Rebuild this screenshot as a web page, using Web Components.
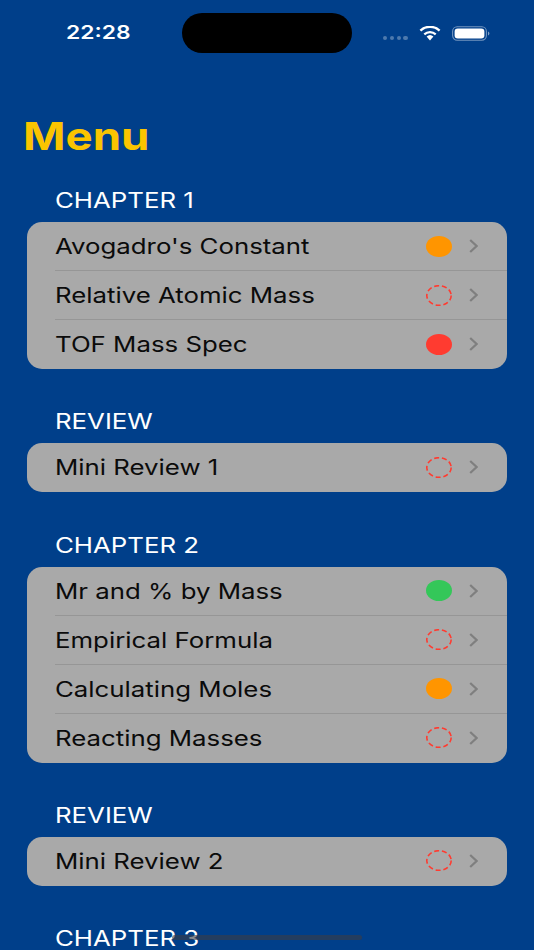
<!DOCTYPE html>
<html>
<head>
<meta charset="utf-8">
<style>
  html, body { margin: 0; height: 950px; overflow: hidden; background: #003f8a; }
  body { font-family: Inter, "Liberation Sans", sans-serif; }
</style>
</head>
<body>
<app-screen>
  <status-bar time="22:28"></status-bar>
  <menu-title>Menu</menu-title>
  <menu-section label="CHAPTER 1">
    <menu-row status="orange">Avogadro's Constant</menu-row>
    <menu-row status="none">Relative Atomic Mass</menu-row>
    <menu-row status="red">TOF Mass Spec</menu-row>
  </menu-section>
  <menu-section label="REVIEW">
    <menu-row status="none">Mini Review 1</menu-row>
  </menu-section>
  <menu-section label="CHAPTER 2">
    <menu-row status="green">Mr and % by Mass</menu-row>
    <menu-row status="none">Empirical Formula</menu-row>
    <menu-row status="orange">Calculating Moles</menu-row>
    <menu-row status="none">Reacting Masses</menu-row>
  </menu-section>
  <menu-section label="REVIEW">
    <menu-row status="none">Mini Review 2</menu-row>
  </menu-section>
  <menu-section label="CHAPTER 3"></menu-section>
</app-screen>
<script>
'use strict';
// the shot is squeezed from a phone screen, so all text is wider than tall
const STRETCH = 1.2;

class AppScreen extends HTMLElement {
  constructor() {
    super();
    this.root = this.attachShadow({mode: 'open'});
  }
  connectedCallback() {
    this.root.innerHTML = `
    <style>
      :host {
        display: block;
        position: relative;
        height: 950px;
        overflow: hidden;
        background: #003f8a;
      }
      .home {
        position: absolute;
        left: 172px;
        top: 935px;
        width: 190px;
        height: 5px;
        border-radius: 3px;
        background: rgba(60, 60, 67, .6);
      }
    </style>
    <slot></slot>
    <div class="home"></div>
    `;
  }
}
customElements.define('app-screen', AppScreen);

class StatusBar extends HTMLElement {
  constructor() {
    super();
    this.root = this.attachShadow({mode: 'open'});
  }
  connectedCallback() {
    this.root.innerHTML = `
    <style>
      :host {
        display: flex;
        align-items: center;
        height: 40px;
        padding-top: 13px;
        color: #fff;
      }
      .time {
        width: 182px;
        box-sizing: border-box;
        padding-left: 66px;
        font-size: 19px;
        font-weight: 600;
        line-height: 40px;
      }
      .time span {
        display: inline-block;
        transform: scaleX(${STRETCH});
        transform-origin: left center;
      }
      .island {
        width: 170px;
        height: 40px;
        border-radius: 20px;
        background: #000;
      }
      .right {
        display: flex;
        align-items: center;
        margin-left: 31px;
      }
      .dots { display: flex; gap: 2.4px; margin: 10px 11px 0 0; }
      .dots i { width: 4.4px; height: 4.4px; border-radius: 50%; background: rgba(255, 255, 255, .3); }
      svg { display: block; }
    </style>
    <div class="time"><span>${this.getAttribute('time')}</span></div>
    <div class="island"></div>
    <div class="right">
      <div class="dots"><i></i><i></i><i></i><i></i></div>
      <svg width="22" height="15" viewBox="0 0 22 15">
        <path d="M11 14.5 7.6 10.6a5 5 0 0 1 6.8 0z" fill="#fff"/>
        <path d="M5.3 8.4a8.4 8.4 0 0 1 11.4 0" fill="none" stroke="#fff" stroke-width="2.2"/>
        <path d="M1.4 4.6a14.2 14.2 0 0 1 19.2 0" fill="none" stroke="#fff" stroke-width="2.4"/>
      </svg>
      <svg width="38" height="15" viewBox="0 0 38 15" style="margin-left:11px">
        <rect x=".6" y=".8" width="33.8" height="13.4" rx="4.6" fill="none" stroke="rgba(255,255,255,.45)" stroke-width="1.1"/>
        <rect x="2.6" y="2.6" width="29.8" height="9.8" rx="3.2" fill="#fff"/>
        <path d="M36 5.6a2 2 0 0 1 0 3.8z" fill="rgba(255,255,255,.5)"/>
      </svg>
    </div>
    `;
  }
}
customElements.define('status-bar', StatusBar);

class MenuTitle extends HTMLElement {
  constructor() {
    super();
    this.root = this.attachShadow({mode: 'open'});
  }
  connectedCallback() {
    this.root.innerHTML = `
    <style>
      :host {
        display: block;
        padding: 60px 0 0 23px;
        height: 76px;
        color: #fac400;
        font-size: 38px;
        font-weight: 700;
        line-height: 46px;
      }
      span {
        display: inline-block;
        transform: scaleX(${STRETCH});
        transform-origin: left center;
      }
    </style>
    <span><slot></slot></span>
    `;
  }
}
customElements.define('menu-title', MenuTitle);

class MenuSection extends HTMLElement {
  constructor() {
    super();
    this.root = this.attachShadow({mode: 'open'});
  }
  connectedCallback() {
    this.root.innerHTML = `
    <style>
      :host {
        display: block;
        margin: 0 27px 41.33px;
      }
      .label {
        height: 22px;
        margin-bottom: 11px;
        padding-left: 28px;
        color: #fff;
        font-size: 21.5px;
        line-height: 22px;
      }
      .label span {
        display: inline-block;
        transform: scaleX(${STRETCH});
        transform-origin: left center;
      }
      .card {
        border-radius: 15px;
        background: #a9a9a9;
        overflow: hidden;
      }
    </style>
    <div class="label"><span>${this.getAttribute('label')}</span></div>
    <div class="card"><slot></slot></div>
    `;
  }
}
customElements.define('menu-section', MenuSection);

class MenuRow extends HTMLElement {
  constructor() {
    super();
    this.root = this.attachShadow({mode: 'open'});
  }
  connectedCallback() {
    const colours = {orange: '#ff9500', red: '#ff3b30', green: '#34c759'};
    const fill = colours[this.getAttribute('status')];
    const dot = fill
      ? `<ellipse cx="13" cy="10.5" rx="13" ry="10.5" fill="${fill}"/>`
      : `<ellipse cx="13" cy="10.5" rx="12.2" ry="9.8" fill="none" stroke="#ff3b30" stroke-width="1.6" stroke-dasharray="5 2.8"/>`;
    this.root.innerHTML = `
    <style>
      :host {
        display: block;
        padding-left: 28px;
        color: #0b0b0b;
        font-size: 21.5px;
      }
      .row {
        display: flex;
        align-items: center;
        gap: 17px;
        box-sizing: border-box;
        height: 49px;
        padding-right: 29px;
        border-bottom: 1px solid #969696;
      }
      :host(:last-child) .row { border-bottom-color: transparent; }
      .text { flex: 1; }
      .text span {
        display: inline-block;
        transform: scaleX(${STRETCH});
        transform-origin: left center;
      }
      svg { display: block; }
    </style>
    <div class="row">
      <div class="text"><span><slot></slot></span></div>
      <svg width="26" height="21" viewBox="0 0 26 21">${dot}</svg>
      <svg width="9" height="14" viewBox="0 0 9 14">
        <path d="M1.2 1 7.6 7 1.2 13" fill="none" stroke="#7f7f7f" stroke-width="2.2"/>
      </svg>
    </div>
    `;
  }
}
customElements.define('menu-row', MenuRow);
</script>
</body>
</html>
